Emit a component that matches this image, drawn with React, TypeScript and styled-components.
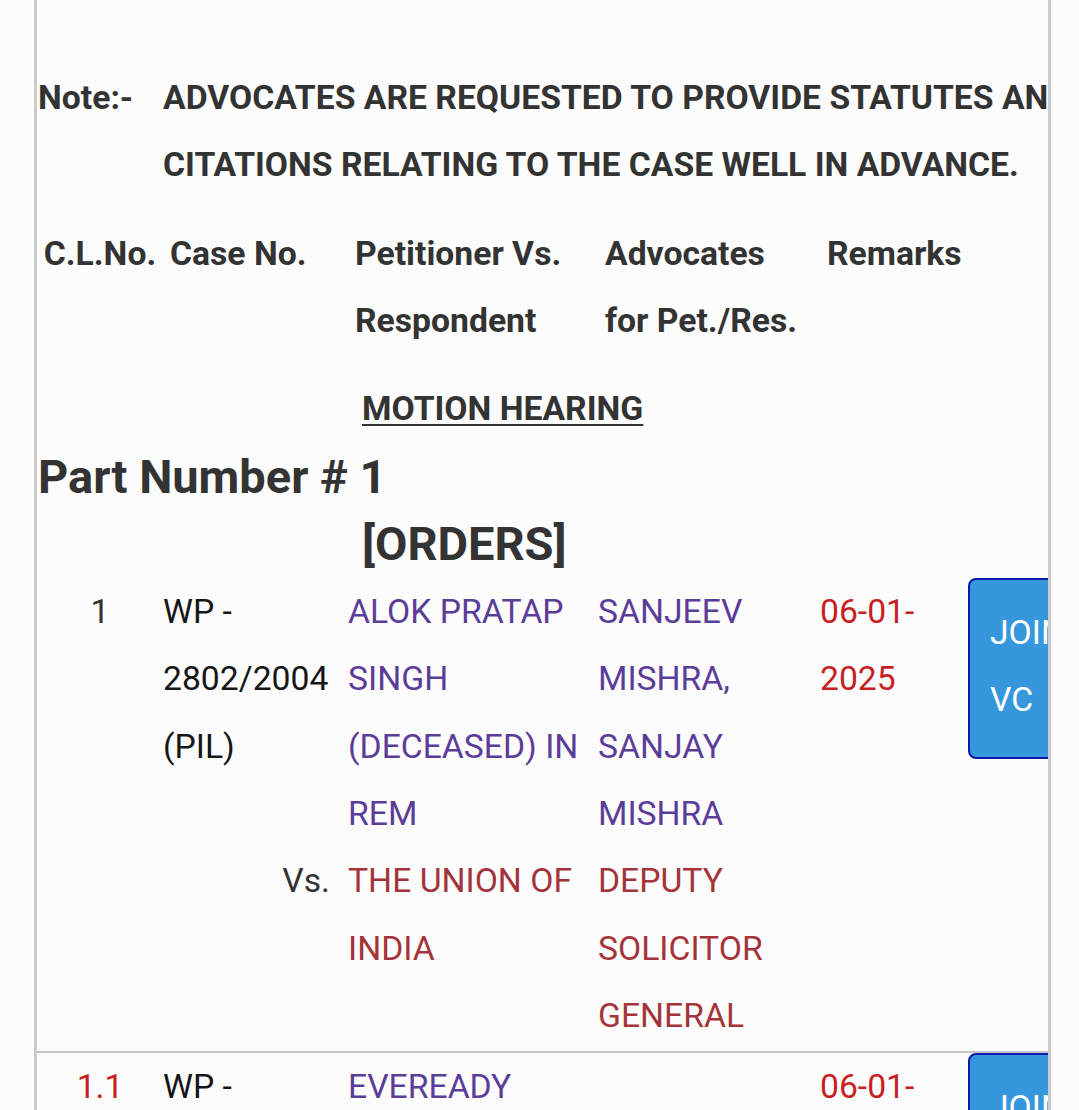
import React from "react";
import styled, { createGlobalStyle } from "styled-components";

const GlobalStyle = createGlobalStyle`
  html, body {
    margin: 0;
    padding: 0;
    background: #fcfcfc;
  }
  body {
    font-family: Roboto, "Noto Sans", "Liberation Sans", sans-serif;
    color: #333333;
  }
`;

const COLS = "126px 185px 250px 222px 148px 195px";

const Frame = styled.div`
  margin-left: 34px;
  width: 1011px;
  min-height: 100vh;
  border-left: 3px solid #cbcbcb;
  border-right: 3px solid #cbcbcb;
  overflow: hidden;
  background: #fcfcfc;
`;

const Sheet = styled.div`
  width: 1126px;
  padding-top: 64px;
  font-size: 33.7px;
  line-height: 67.35px;
`;

const Grid = styled.div`
  display: grid;
  grid-template-columns: ${COLS};
`;

const NoteRow = styled(Grid)`
  font-weight: 700;
  color: #333333;
`;

const NoteLabel = styled.div`
  padding-left: 1px;
`;

const NoteText = styled.div`
  grid-column: 2 / -1;
`;

const HeaderRow = styled(Grid)`
  margin-top: 21px;
  font-weight: 700;
  color: #333333;
`;

const HeadCell = styled.div<{ $center?: boolean }>`
  padding: ${(p) => (p.$center ? "0" : "0 12px 0 7px")};
  text-align: ${(p) => (p.$center ? "center" : "left")};
  white-space: ${(p) => (p.$center ? "nowrap" : "normal")};
`;

const SectionRow = styled(Grid)`
  margin-top: 21px;
`;

const SectionTitle = styled.div`
  grid-column: 3 / -1;
  padding-left: 14px;
  font-weight: 700;
  color: #333333;
  text-decoration: underline;
  text-underline-offset: 4px;
  text-decoration-thickness: 2px;
`;

const PartTitle = styled.div`
  padding-left: 1px;
  font-size: 47px;
  line-height: 67.35px;
  font-weight: 700;
  color: #333333;
`;

const OrdersRow = styled(Grid)`
  font-size: 47px;
  line-height: 68px;
  font-weight: 700;
  color: #333333;
`;

const OrdersTitle = styled.div`
  grid-column: 3 / -1;
  padding-left: 14px;
`;

const DataRow = styled(Grid)<{ $divider?: boolean }>`
  grid-template-rows: auto auto;
  padding-bottom: ${(p) => (p.$divider ? "2px" : "0")};
  border-bottom: ${(p) => (p.$divider ? "2px solid #c6c6c6" : "none")};
`;

const ClNo = styled.div<{ $color: string }>`
  grid-column: 1;
  grid-row: 1 / span 2;
  text-align: center;
  color: ${(p) => p.$color};
`;

const CaseNo = styled.div`
  grid-column: 2;
  grid-row: 1;
  padding-right: 18px;
  color: #161616;
`;

const Versus = styled.div`
  grid-column: 2;
  grid-row: 2;
  padding-right: 18px;
  text-align: right;
  color: #333333;
`;

const Party = styled.div<{ $side: "pet" | "res" }>`
  grid-column: 3;
  grid-row: ${(p) => (p.$side === "pet" ? 1 : 2)};
  padding-right: 15px;
  color: ${(p) => (p.$side === "pet" ? "#5b3d99" : "#a4343a")};
`;

const Advocate = styled.div<{ $side: "pet" | "res" }>`
  grid-column: 4;
  grid-row: ${(p) => (p.$side === "pet" ? 1 : 2)};
  padding-right: 15px;
  color: ${(p) => (p.$side === "pet" ? "#5b3d99" : "#a4343a")};
`;

const DateCell = styled.div`
  grid-column: 5;
  grid-row: 1 / span 2;
  padding-right: 12px;
  color: #c81f23;
`;

const ActionCell = styled.div`
  grid-column: 6;
  grid-row: 1 / span 2;
  align-self: start;
`;

const JoinButton = styled.button`
  display: block;
  width: 130px;
  margin: 0;
  padding: 19px 20px 23px;
  border: 2px solid #0b1aa8;
  border-radius: 8px;
  background: #3697dc;
  color: #ffffff;
  font-family: inherit;
  font-size: inherit;
  line-height: inherit;
  text-align: left;
  cursor: pointer;
`;

type Case = {
  clNo: string;
  clColor: string;
  caseNo: string;
  petitioner: string;
  respondent: string;
  petAdv: string;
  resAdv: string;
  date: [string, string];
  divider?: boolean;
};

const cases: Case[] = [
  {
    clNo: "1",
    clColor: "#333333",
    caseNo: "WP - 2802/2004 (PIL)",
    petitioner: "ALOK PRATAP SINGH (DECEASED) IN REM",
    respondent: "THE UNION OF INDIA",
    petAdv: "SANJEEV MISHRA, SANJAY MISHRA",
    resAdv: "DEPUTY SOLICITOR GENERAL",
    date: ["06-01-", "2025"],
    divider: true,
  },
  {
    clNo: "1.1",
    clColor: "#c81f23",
    caseNo: "WP - 1270/2012 (PIL)",
    petitioner: "EVEREADY INDUSTRIES INDIA LIMITED",
    respondent: "THE UNION OF INDIA",
    petAdv: "",
    resAdv: "DEPUTY SOLICITOR GENERAL",
    date: ["06-01-", "2025"],
  },
];

export default function App() {
  return (
    <>
      <GlobalStyle />
      <Frame>
        <Sheet>
          <NoteRow>
            <NoteLabel>Note:-</NoteLabel>
            <NoteText>
              ADVOCATES ARE REQUESTED TO PROVIDE STATUTES AND CITATIONS RELATING TO THE CASE WELL IN ADVANCE.
            </NoteText>
          </NoteRow>

          <HeaderRow>
            <HeadCell $center>C.L.No.</HeadCell>
            <HeadCell>Case No.</HeadCell>
            <HeadCell>Petitioner Vs. Respondent</HeadCell>
            <HeadCell>Advocates for Pet./Res.</HeadCell>
            <HeadCell>Remarks</HeadCell>
          </HeaderRow>

          <SectionRow>
            <SectionTitle>MOTION HEARING</SectionTitle>
          </SectionRow>

          <PartTitle>Part Number # 1</PartTitle>
          <OrdersRow>
            <OrdersTitle>[ORDERS]</OrdersTitle>
          </OrdersRow>

          {cases.map((c) => (
            <DataRow key={c.clNo} $divider={c.divider}>
              <ClNo $color={c.clColor}>{c.clNo}</ClNo>
              <CaseNo>{c.caseNo}</CaseNo>
              <Versus>Vs.</Versus>
              <Party $side="pet">{c.petitioner}</Party>
              <Party $side="res">{c.respondent}</Party>
              <Advocate $side="pet">{c.petAdv}</Advocate>
              <Advocate $side="res">{c.resAdv}</Advocate>
              <DateCell>
                {c.date[0]}
                <wbr />
                {c.date[1]}
              </DateCell>
              <ActionCell>
                <JoinButton type="button">JOIN VC</JoinButton>
              </ActionCell>
            </DataRow>
          ))}
        </Sheet>
      </Frame>
    </>
  );
}
